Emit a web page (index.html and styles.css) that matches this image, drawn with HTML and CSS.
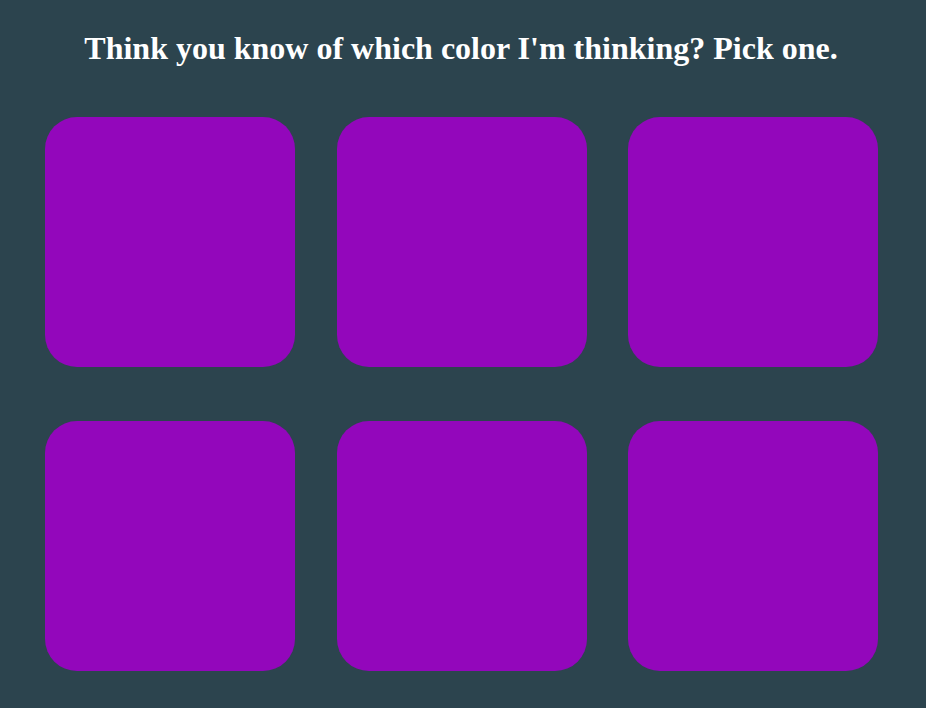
FILE: index.html
```html
<!DOCTYPE html>
<html lang="en">
<head>
  <meta charset="UTF-8" />
  <title>Color Guess</title>
  <link rel="stylesheet" href="styles.css">
</head>
<body>
  <h1 class="title">Think you know of which color I'm thinking? Pick one.</h1>
  <div class="board">
    <div class="square"></div>
    <div class="square"></div>
    <div class="square"></div>
    <div class="square"></div>
    <div class="square"></div>
    <div class="square"></div>
  </div>
</body>
</html>
```

FILE: styles.css
```css
* {
  margin: 0;
  padding: 0;
  box-sizing: border-box;
}
body {
  background: #2c444e;
  font-family: 'Liberation Serif', 'Times New Roman', serif;
  color: #ffffff;
  height: 100vh;
  overflow: hidden;
}
.title {
  font-size: 32px;
  font-weight: bold;
  line-height: 37px;
  text-align: center;
  padding: 30px 4px 0 0;
}
.board {
  display: grid;
  grid-template-columns: repeat(3, 250px);
  column-gap: 41.5px;
  row-gap: 54px;
  margin-top: 50px;
  padding-left: 45px;
}
.square {
  width: 250px;
  height: 250px;
  background: #9307bb;
  border-radius: 32px;
}
```
